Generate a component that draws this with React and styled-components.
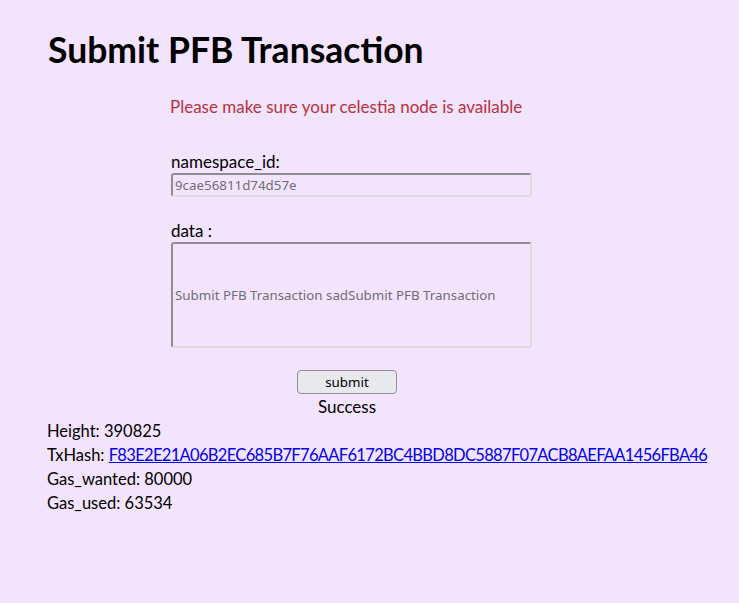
import React from 'react';
import styled, { createGlobalStyle } from 'styled-components';

const GlobalStyle = createGlobalStyle`
  html, body {
    margin: 0;
    padding: 0;
    background-color: #f3e4fd;
  }
  body {
    font-family: Lato, "Noto Sans", sans-serif;
    color: #000;
  }
`;

const Page = styled.div`
  width: 600px;
  padding: 29px 0 0 47px;
  box-sizing: content-box;
  min-height: 574px;
`;

const Title = styled.h1`
  font-size: 35.5px;
  font-weight: 700;
  margin: 0 0 0 1px;
  line-height: 42px;
`;

const Form = styled.form`
  display: flex;
  flex-direction: column;
  padding-left: 124px;
  width: 361px;
`;

const Warning = styled.p`
  color: #b5333b;
  font-size: 17px;
  margin: 24px 0 0 -1px;
  line-height: 24px;
`;

const Label = styled.label`
  font-size: 17px;
  line-height: 22px;
  margin-top: ${props => props.gap}px;
`;

const Field = styled.input`
  width: 361px;
  height: ${props => props.tall ? 106 : 24}px;
  box-sizing: border-box;
  margin: 0;
  padding: 0 2px;
  background: transparent;
  border: 2px solid;
  border-color: #8e8e8e #dcdcdc #dcdcdc #8e8e8e;
  border-radius: 3px;
  font-family: "Noto Sans", sans-serif;
  font-size: 13.33px;
  outline: none;
  &::placeholder {
    color: #6f6f75;
  }
`;

const Actions = styled.div`
  display: flex;
  flex-direction: column;
  align-items: center;
  width: 600px;
  margin-top: 22px;
`;

const Button = styled.button`
  width: 100px;
  height: 24px;
  background: #e9e9ed;
  border: 1px solid #8f8f9d;
  border-radius: 4px;
  font-family: "Noto Sans", sans-serif;
  font-size: 13.33px;
  color: #000;
  padding: 0;
`;

const Status = styled.div`
  font-size: 17px;
  line-height: 24px;
  margin-top: 1px;
`;

const Result = styled.div`
  font-size: 16.5px;
  line-height: 24px;
  white-space: nowrap;
`;

const Hash = styled.a`
  color: #0000ee;
  text-decoration: underline;
  letter-spacing: -0.67px;
`;

export default function App() {
  return (
    <>
      <GlobalStyle />
      <Page>
        <Title>Submit PFB Transaction</Title>
        <Form onSubmit={e => e.preventDefault()}>
          <Warning>Please make sure your celestia node is available</Warning>
          <Label gap={32}>namespace_id:</Label>
          <Field placeholder="9cae56811d74d57e" />
          <Label gap={23}>data :</Label>
          <Field tall placeholder="Submit PFB Transaction sadSubmit PFB Transaction" />
        </Form>
        <Actions>
          <Button type="button">submit</Button>
          <Status>Success</Status>
        </Actions>
        <Result>Height: 390825</Result>
        <Result>
          TxHash: <Hash href="#">F83E2E21A06B2EC685B7F76AAF6172BC4BBD8DC5887F07ACB8AEFAA1456FBA46</Hash>
        </Result>
        <Result>Gas_wanted: 80000</Result>
        <Result>Gas_used: 63534</Result>
      </Page>
    </>
  );
}
